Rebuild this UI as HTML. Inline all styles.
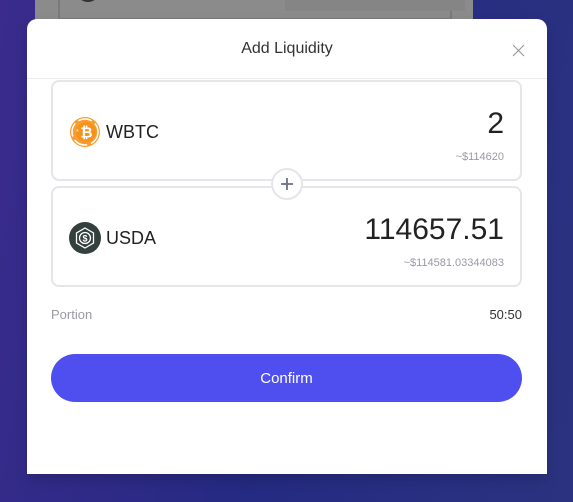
<!DOCTYPE html>
<html><head><meta charset="utf-8"><style>
*{margin:0;padding:0;box-sizing:border-box}
body{width:573px;height:502px;overflow:hidden;position:relative;font-family:"Liberation Sans",sans-serif;background:linear-gradient(100deg,#3a2b8c 0%,#252a82 50%,#2b3380 100%);}
.under{position:absolute;left:35px;top:0;width:438px;height:40px;background:#8b8b8b}
.under .in{position:absolute;left:23px;top:-10px;width:394px;height:30px;border:2px solid #7a7a7a;border-top:none}
.under .bar{position:absolute;left:250px;top:0;width:180px;height:11px;background:#858585}
.under .dot{position:absolute;left:43px;top:-14px;width:20px;height:16px;border-radius:50%;background:#333}
.modal{position:absolute;left:27px;top:19px;width:520px;height:455px;background:#fff;border-radius:10px 10px 0 0;box-shadow:0 6px 12px rgba(0,0,0,.15)}
.hd{height:60px;border-bottom:1px solid #ececf0;text-align:center;line-height:60px;font-size:16px;color:#333}
.x{position:absolute;right:22px;top:25px}
.card{position:absolute;left:24px;width:471px;height:101px;border:2px solid #e6e6ea;border-radius:8px}
.tok{position:absolute;left:16px;top:34px;display:flex;align-items:center;font-size:18px;color:#222}
.tok svg{margin-right:5px}
.amt{position:absolute;right:16px;font-size:30px;color:#222}
.usd{position:absolute;right:16px;font-size:11px;color:#9a9aa5}
.plus{position:absolute;left:244px;top:149px;width:32px;height:32px;border-radius:50%;background:#fff;border:2px solid #e6e6ea}
.row{position:absolute;top:288px;font-size:13px}
.btn{position:absolute;left:24px;top:335px;width:471px;height:48px;border-radius:24px;background:#4f4ff0;color:#fff;text-align:center;line-height:50px;font-size:15px}
</style></head><body>
<div class="under"><div class="in"></div><div class="bar"></div><div class="dot"></div></div>
<div class="modal">
<div class="hd">Add Liquidity</div>
<svg class="x" width="13" height="13" viewBox="0 0 13 13"><path d="M1 1L12 12M12 1L1 12" stroke="#999" stroke-width="1.1"/></svg>
<div class="card" style="top:61px">
<div class="tok"><svg width="32" height="32" viewBox="0 0 32 32"><circle cx="16" cy="16" r="15" fill="#f7931a" opacity=".9"/><circle cx="16" cy="16" r="13" fill="none" stroke="#fff" stroke-width="1.5" stroke-dasharray="14 4"/><circle cx="17" cy="16" r="10" fill="#f7931a"/><text x="17.5" y="21.5" font-size="15" font-weight="bold" fill="#fff" text-anchor="middle" font-family="Liberation Sans">₿</text><text x="7" y="18" font-size="7" fill="#fff">*</text></svg>WBTC</div>
<div class="amt" style="top:25px">2</div>
<div class="usd" style="top:69px">~$114620</div>
</div>
<div class="card" style="top:167px">
<div class="tok"><svg width="32" height="32" viewBox="0 0 32 32"><circle cx="16" cy="16" r="16" fill="#34403d"/><path d="M16 6L24.5 11V21L16 26L7.5 21V11Z" fill="none" stroke="#fff" stroke-width="1.3"/><circle cx="16" cy="16" r="5.5" fill="none" stroke="#fff" stroke-width="1.3"/><text x="16" y="19.5" font-size="9" font-weight="bold" fill="#fff" text-anchor="middle" font-family="Liberation Sans">$</text></svg>USDA</div>
<div class="amt" style="top:25px">114657.51</div>
<div class="usd" style="top:69px">~$114581.03344083</div>
</div>
<div class="plus"><svg width="28" height="28" viewBox="0 0 28 28"><path d="M14 8V20M8 14H20" stroke="#6b6f80" stroke-width="1.8"/></svg></div>
<div class="row" style="left:24px;color:#9a9aa5">Portion</div>
<div class="row" style="right:25px;color:#333">50:50</div>
<div class="btn">Confirm</div>
</div>
</body></html>
